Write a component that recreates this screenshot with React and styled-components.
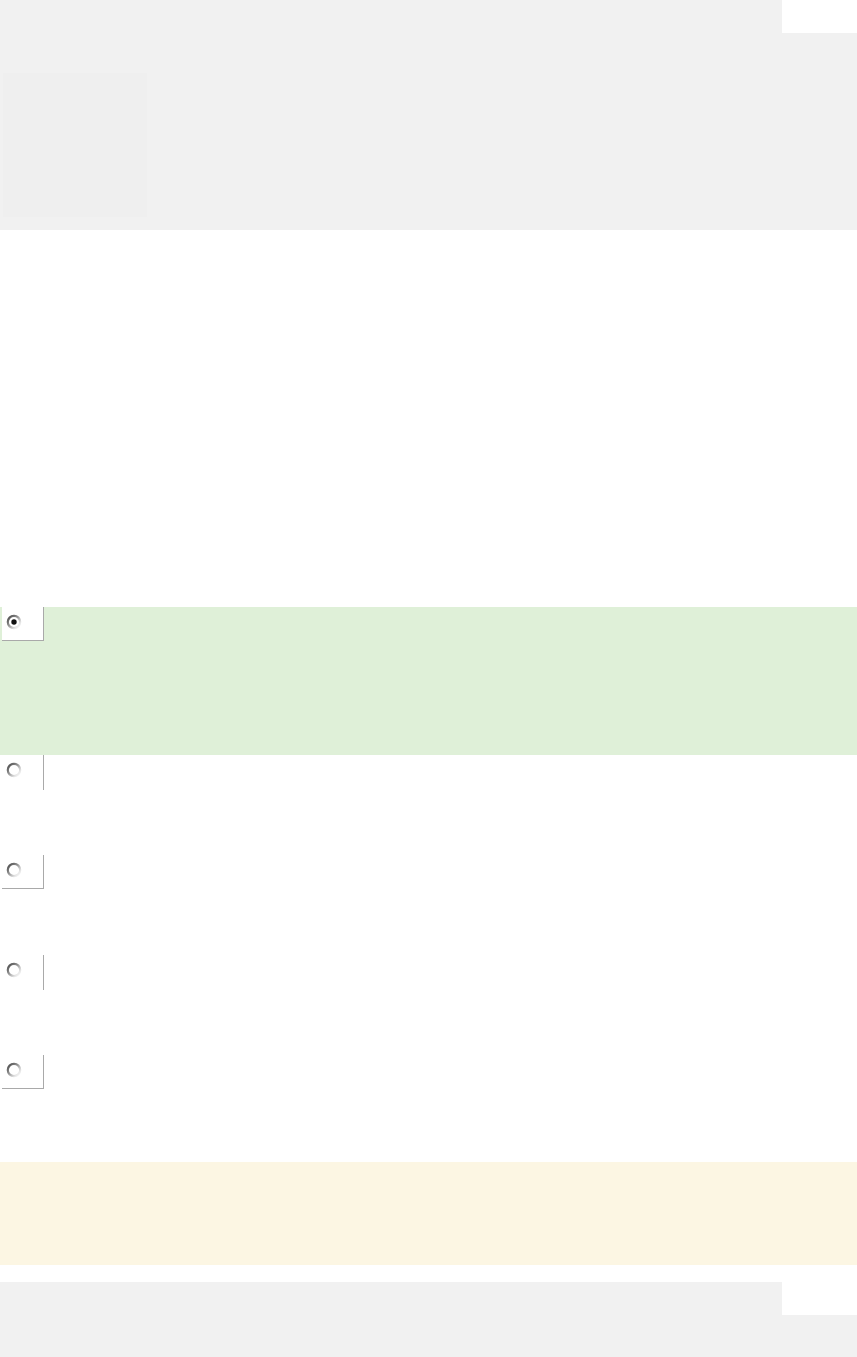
import React, { useId } from "react";
import styled, { createGlobalStyle } from "styled-components";

const GlobalStyle = createGlobalStyle`
  html, body { margin: 0; padding: 0; background: #ffffff; }
  body { font-family: "Liberation Sans", Arial, sans-serif; font-size: 14px; color: #333; }
  * { box-sizing: border-box; }
`;

const Page = styled.div`
  display: flex;
  flex-direction: column;
  width: 857px;
`;

const Header = styled.header`
  background: #f1f1f1;
  height: 230px;
  display: flex;
  flex-direction: column;
`;

const TopBar = styled.div`
  display: flex;
  justify-content: flex-end;
  height: 33px;
`;

const CornerBox = styled.div`
  width: 75px;
  height: 33px;
  background: #ffffff;
`;

const Thumb = styled.div`
  margin: 40px 0 0 3px;
  width: 144px;
  height: 144px;
  background: #efefef;
`;

const QuestionArea = styled.section`
  height: 377px;
  color: transparent;
`;

const OptionList = styled.ul`
  list-style: none;
  margin: 0;
  padding: 0;
  display: flex;
  flex-direction: column;
`;

const Option = styled.li`
  display: flex;
  align-items: flex-start;
  height: ${(p) => p.$height}px;
  background: ${(p) => (p.$selected ? "#dff0d8" : "transparent")};
`;

const RadioCell = styled.label`
  display: flex;
  align-items: flex-start;
  margin-left: 2px;
  width: 42px;
  height: ${(p) => (p.$underline ? 34 : 35)}px;
  padding: 7px 0 0 4px;
  background: #ffffff;
  border-right: 1px solid #a9a9a9;
  border-bottom: ${(p) => (p.$underline ? "1px solid #a9a9a9" : "none")};
  cursor: pointer;
`;

const RadioSvg = styled.svg`
  display: block;
  width: 16px;
  height: 16px;
`;

function Radio({ checked }) {
  const id = useId().replace(/:/g, "");
  return (
    <RadioSvg viewBox="0 0 16 16" aria-hidden="true">
      <defs>
        <linearGradient id={`g${id}`} x1="0" y1="0.1" x2="0.9" y2="1">
          <stop offset="0" stopColor="#4a4a4a" />
          <stop offset="0.45" stopColor="#999999" />
          <stop offset="0.8" stopColor="#e4e4e4" />
          <stop offset="1" stopColor="#f8f8f8" />
        </linearGradient>
      </defs>
      <circle cx="8" cy="8" r="6.2" fill="#ffffff" stroke={`url(#g${id})`} strokeWidth="2.2" />
      {checked && <circle cx="8" cy="8" r="2.7" fill="#111111" />}
    </RadioSvg>
  );
}

const Feedback = styled.div`
  margin-top: 7px;
  height: 103px;
  background: #fcf6e3;
`;

const Footer = styled.footer`
  margin-top: 17px;
  height: 75px;
  background: #f1f1f1;
  display: flex;
  flex-direction: column;
`;

const options = [
  { height: 148, selected: true, underline: true },
  { height: 100, selected: false, underline: false },
  { height: 100, selected: false, underline: true },
  { height: 100, selected: false, underline: false },
  { height: 100, selected: false, underline: true },
];

export default function App() {
  return (
    <>
      <GlobalStyle />
      <Page>
        <Header>
          <TopBar>
            <CornerBox />
          </TopBar>
          <Thumb />
        </Header>
        <QuestionArea />
        <OptionList>
          {options.map((o, i) => (
            <Option key={i} $height={o.height} $selected={o.selected}>
              <RadioCell $underline={o.underline}>
                <Radio checked={o.selected} />
              </RadioCell>
            </Option>
          ))}
        </OptionList>
        <Feedback />
        <Footer>
          <TopBar>
            <CornerBox />
          </TopBar>
        </Footer>
      </Page>
    </>
  );
}
